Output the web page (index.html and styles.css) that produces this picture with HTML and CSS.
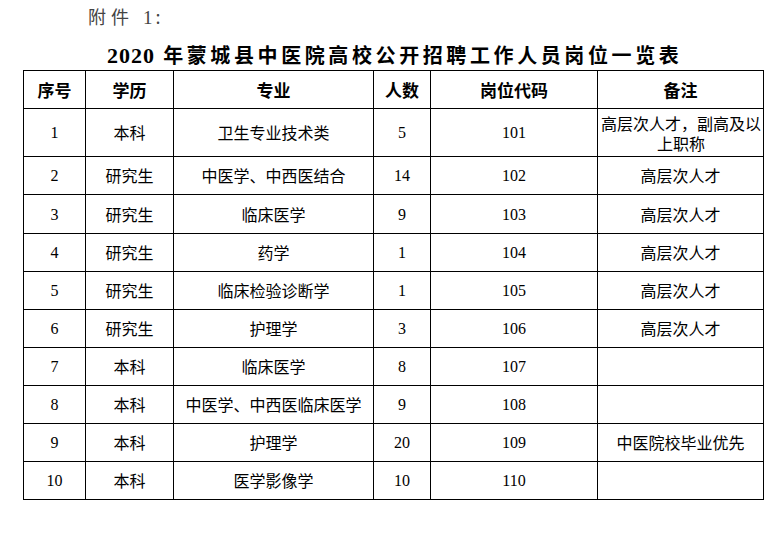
FILE: index.html
```html
<!DOCTYPE html>
<html lang="zh-CN">
<head>
<meta charset="utf-8">
<title>2020年蒙城县中医院高校公开招聘工作人员岗位一览表</title>
<link rel="stylesheet" href="styles.css">
</head>
<body>
<div class="page">
  <div class="attach">附件 <span class="num">1</span>:</div>
  <h1 class="title"><span class="num">2020</span> 年蒙城县中医院高校公开招聘工作人员岗位一览表</h1>
  <table class="jobs">
    <colgroup>
      <col class="c1"><col class="c2"><col class="c3"><col class="c4"><col class="c5"><col class="c6">
    </colgroup>
    <thead>
      <tr><th>序号</th><th>学历</th><th>专业</th><th>人数</th><th>岗位代码</th><th>备注</th></tr>
    </thead>
    <tbody>
      <tr class="tall"><td class="n">1</td><td>本科</td><td>卫生专业技术类</td><td class="n">5</td><td class="n">101</td><td class="wrap">高层次人才，副高及以上职称</td></tr>
      <tr><td class="n">2</td><td>研究生</td><td>中医学、中西医结合</td><td class="n">14</td><td class="n">102</td><td>高层次人才</td></tr>
      <tr class="plus"><td class="n">3</td><td>研究生</td><td>临床医学</td><td class="n">9</td><td class="n">103</td><td>高层次人才</td></tr>
      <tr><td class="n">4</td><td>研究生</td><td>药学</td><td class="n">1</td><td class="n">104</td><td>高层次人才</td></tr>
      <tr><td class="n">5</td><td>研究生</td><td>临床检验诊断学</td><td class="n">1</td><td class="n">105</td><td>高层次人才</td></tr>
      <tr><td class="n">6</td><td>研究生</td><td>护理学</td><td class="n">3</td><td class="n">106</td><td>高层次人才</td></tr>
      <tr><td class="n">7</td><td>本科</td><td>临床医学</td><td class="n">8</td><td class="n">107</td><td></td></tr>
      <tr><td class="n">8</td><td>本科</td><td>中医学、中西医临床医学</td><td class="n">9</td><td class="n">108</td><td></td></tr>
      <tr><td class="n">9</td><td>本科</td><td>护理学</td><td class="n">20</td><td class="n">109</td><td>中医院校毕业优先</td></tr>
      <tr><td class="n">10</td><td>本科</td><td>医学影像学</td><td class="n">10</td><td class="n">110</td><td></td></tr>
    </tbody>
  </table>
</div>
</body>
</html>
```
FILE: styles.css
```css
html, body {
  margin: 0;
  padding: 0;
  background: #ffffff;
}
body {
  font-family: "Noto Sans CJK SC", "Noto Sans", sans-serif;
  color: #000;
}
.page {
  padding: 4px 0 0 23px;
}
.attach {
  height: 24px;
  line-height: 24px;
  font-size: 18px;
  color: #444;
  padding-left: 65px;
  letter-spacing: 5px;
}
.attach .num {
  font-family: "Liberation Serif", serif;
  font-size: 19px;
  letter-spacing: 3px;
}
.title {
  margin: 12px 0 0 0;
  height: 30px;
  line-height: 30px;
  font-size: 20px;
  font-weight: 700;
  padding-left: 84px;
  letter-spacing: 3.6px;
  white-space: nowrap;
}
.title .num {
  font-family: "Liberation Serif", serif;
  font-size: 22px;
  letter-spacing: 1px;
}
.jobs {
  border-collapse: collapse;
  table-layout: fixed;
  width: 740px;
}
.c1 { width: 62px; }
.c2 { width: 88px; }
.c3 { width: 200px; }
.c4 { width: 57px; }
.c5 { width: 167px; }
.c6 { width: 166px; }
.jobs th, .jobs td {
  border: 1px solid #000;
  padding: 0;
  text-align: center;
  vertical-align: middle;
  font-size: 16px;
  line-height: 19px;
  white-space: nowrap;
}
.jobs th {
  height: 37px;
  font-size: 17px;
  font-weight: 700;
}
.jobs td {
  height: 37px;
  font-weight: 400;
}
.jobs tr.tall td {
  height: 47px;
}
.jobs tr.plus td {
  height: 38px;
}
.jobs td.n {
  font-family: "Liberation Serif", serif;
  font-size: 16px;
}
.jobs td.wrap {
  white-space: normal;
  padding-left: 1px;
  line-height: 20px;
}
```
